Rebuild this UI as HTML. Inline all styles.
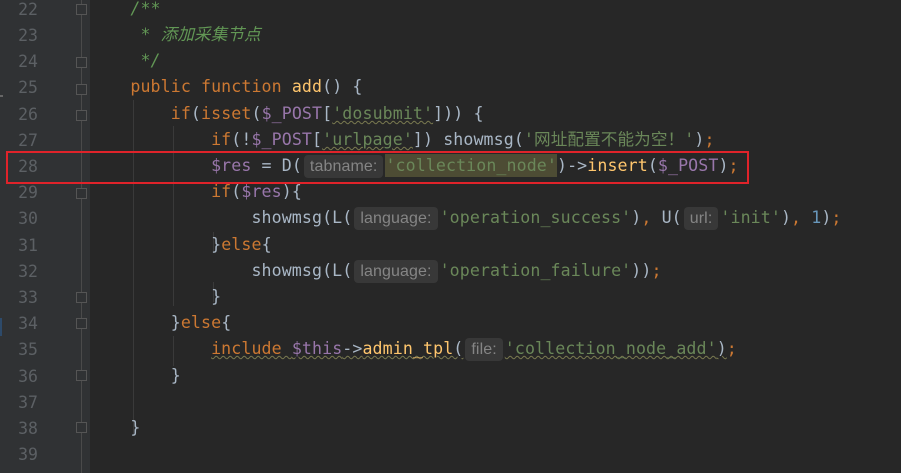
<!DOCTYPE html><html><head><meta charset="utf-8"><style>
body{margin:0;width:901px;height:473px;overflow:hidden;background:#272727;font-family:"DejaVu Sans Mono","Liberation Mono","Noto Sans CJK SC",monospace;}
#g{position:absolute;left:0;top:0;width:90px;height:473px;background:#303234;}
.n{position:absolute;left:0;width:38px;text-align:right;color:#5c6064;font-size:16.5px;font-family:"DejaVu Sans Mono",monospace;line-height:20px}
.l{position:absolute;left:90px;white-space:pre;color:#a9b7c6;font-size:16.6px;line-height:26px;letter-spacing:0.1px}
.k{color:#cc7832}.f{color:#ffc66d}.v{color:#9876aa}.s{color:#6a8759}.c{color:#629755;font-style:italic}.num{color:#6897bb}
.h{display:inline-block;background:#383838;color:#858585;font-family:"Liberation Sans",sans-serif;font-size:16px;line-height:23px;padding:0 6px;border-radius:4px;margin:0 2px 0 2px;vertical-align:0px}
.u{text-decoration:underline wavy #7a7a50;text-decoration-thickness:1px}
.guide{position:absolute;width:1px;background:#3a3a3a}
.fold{position:absolute;left:76px;width:9px;height:9px;border:1px solid #555;background:#303234}
</style></head><body>
<div id="g"></div>
<div class="guide" style="left:81px;top:0;height:473px;background:#4a4a4a"></div>
<div class="guide" style="left:133px;top:100px;height:336px"></div>
<div class="guide" style="left:173px;top:126px;height:180px"></div>
<div class="guide" style="left:173px;top:336px;height:30px"></div>
<div class="guide" style="left:213px;top:232px;height:20px"></div>
<div class="guide" style="left:213px;top:282px;height:20px"></div>
<div class="fold" style="top:4px"></div><div class="fold" style="top:57px"></div><div class="fold" style="top:84px"></div><div class="fold" style="top:110px"></div><div class="fold" style="top:188px"></div><div class="fold" style="top:292px"></div><div class="fold" style="top:318px"></div><div class="fold" style="top:370px"></div><div class="fold" style="top:422px"></div>
<div style="position:absolute;left:0;top:95px;width:3px;height:2px;background:#666"></div>
<div style="position:absolute;left:0;top:318px;width:2px;height:18px;background:#2d4a6a"></div>
<div class="n" style="top:0">22</div><div class="n" style="top:26px">23</div><div class="n" style="top:52px">24</div><div class="n" style="top:78px">25</div><div class="n" style="top:105px">26</div><div class="n" style="top:131px">27</div><div class="n" style="top:157px">28</div><div class="n" style="top:183px">29</div><div class="n" style="top:209px">30</div><div class="n" style="top:236px">31</div><div class="n" style="top:262px">32</div><div class="n" style="top:288px">33</div><div class="n" style="top:314px">34</div><div class="n" style="top:340px">35</div><div class="n" style="top:367px">36</div><div class="n" style="top:393px">37</div><div class="n" style="top:419px">38</div><div class="n" style="top:445px">39</div>
<div class="l" style="top:-4px">    <span class="c">/**</span></div>
<div class="l" style="top:22px">    <span class="c"> * 添加采集节点</span></div>
<div class="l" style="top:48px">    <span class="c"> */</span></div>
<div class="l" style="top:74px">    <span class="k">public function </span><span class="f">add</span>() {</div>
<div class="l" style="top:101px">        <span class="k">if</span>(<span class="k">isset</span>(<span class="v">$_POST</span>[<span class="s u">'dosubmit'</span>])) {</div>
<div class="l" style="top:127px">            <span class="k">if</span>(!<span class="v">$_POST</span>[<span class="s u">'urlpage'</span>]) showmsg(<span class="s">'网址配置不能为空！'</span>)<span class="k">;</span></div>
<div class="l" style="top:153px">            <span class="v">$res</span> = D(<span class="h">tabname:</span><span class="s" style="background:#4d4c34;padding:2px 0">'collection_node'</span>)-&gt;<span class="f">insert</span>(<span class="v">$_POST</span>)<span class="k">;</span></div>
<div class="l" style="top:179px">            <span class="k">if</span>(<span class="v">$res</span>){</div>
<div class="l" style="top:205px">                showmsg(L(<span class="h">language:</span><span class="s">'operation_success'</span>)<span class="k">, </span>U(<span class="h">url:</span><span class="s">'init'</span>)<span class="k">, </span><span class="num">1</span>)<span class="k">;</span></div>
<div class="l" style="top:232px">            }<span class="k">else</span>{</div>
<div class="l" style="top:258px">                showmsg(L(<span class="h">language:</span><span class="s">'operation_failure'</span>))<span class="k">;</span></div>
<div class="l" style="top:284px">            }</div>
<div class="l" style="top:310px">        }<span class="k">else</span>{</div>
<div class="l" style="top:336px">            <span class="u"><span class="k">include </span><span class="v">$this</span>-&gt;<span class="f">admin_tpl</span>(<span class="h">file:</span><span class="s">'collection_node_add'</span>)</span><span class="k">;</span></div>
<div class="l" style="top:363px">        }</div>
<div class="l" style="top:415px">    }</div>
<div style="position:absolute;left:6px;top:151px;width:739px;height:29px;border:2px solid #e0232a"></div>
</body></html>
